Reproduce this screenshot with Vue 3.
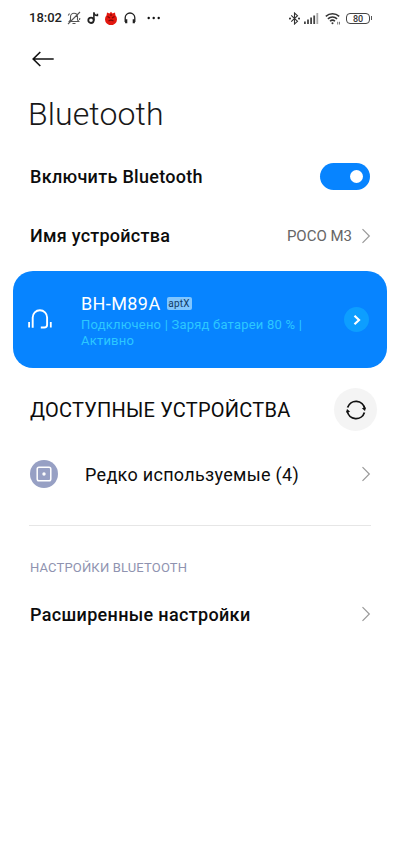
<script setup>
const chevron = 'M1.5 1.2 8.3 8 1.5 14.8'
</script>

<template>
  <main class="screen">
    <header class="status">
      <span class="clock">18:02</span>
      <svg class="s-bell" width="14" height="14" viewBox="0 0 14 14" fill="none" stroke="#555" stroke-width="1.1">
        <path d="M2.2 10.5h9.6l-1.3-1.8V6C10.500 3.700 9 2.300 7 2.300S3.500 3.700 3.500 6v2.700zM5.500 12.500h3M1 13 13 1M1.200 4.500l1.300-2M12.800 7l-.3 2" />
      </svg>
      <svg class="s-note" width="12" height="14" viewBox="0 0 12 14" fill="none" stroke="#222" stroke-width="1.800">
        <circle cx="4" cy="9.300" r="2.700" />
        <path d="M6.900 9.500V1.200c.2 2.200 1.500 3.500 3.500 3.300V2.800" stroke-width="1.600" />
      </svg>
      <svg class="s-red" width="12" height="14" viewBox="0 0 12 14">
        <path d="M2 1.500 4.500 2.500 6 .8l1.500 1.700L10 1.500l.4 2.700A6 6 0 1 1 1.600 4.200z" fill="#e3170f" />
        <path d="m2.500 5.500 2.500 1.500M9.500 5.500 7 7M3.500 10q2.500-1.800 5 0M6 3v2" stroke="#7c0907" stroke-width="1.100" fill="none" />
      </svg>
      <svg class="s-head" width="12" height="13" viewBox="0 0 12 13" fill="none" stroke="#222" stroke-width="1.300">
        <path d="M1.200 10V5.800a4.800 4.800 0 0 1 9.600 0V10" />
        <path d="M2.200 7.300v4M9.800 7.300v4" stroke-width="2.200" />
      </svg>
      <svg class="s-dots" width="14" height="4" viewBox="0 0 14 4" fill="#111">
        <circle cx="1.700" cy="2" r="1.200" /><circle cx="6.700" cy="2" r="1.200" /><circle cx="11.700" cy="2" r="1.200" />
      </svg>
      <span class="grow"></span>
      <svg class="s-bt" width="11" height="13" viewBox="0 0 11 13" fill="none" stroke="#333" stroke-width="1.100">
        <path d="m2.200 3.300 6.300 6L5.500 12V1l3 2.700-6.300 6" />
        <circle cx="1" cy="6.500" r=".5" /><circle cx="10" cy="6.500" r=".5" />
      </svg>
      <svg class="s-sig" width="15" height="11" viewBox="0 0 15 11" fill="#444">
        <path d="M0 8.500h1.800V11H0zM3.100 6.500h1.800V11H3.100zM6.200 4.500H8V11H6.200zM9.300 2.500h1.800V11H9.300z" />
        <path d="M12.400 0h1.800v11h-1.800z" fill="#aaa" />
      </svg>
      <svg class="s-wifi" width="17" height="13" viewBox="0 0 17 13" fill="none" stroke="#333" stroke-width="1.500">
        <path d="M.8 4.400a10 10 0 0 1 13.400 0M2.900 6.900a6.800 6.800 0 0 1 9.200 0M5 9.300a3.700 3.700 0 0 1 5 0" />
        <circle cx="7.500" cy="11.200" r="1" fill="#333" stroke="none" />
        <path d="M12.700 9.800v2.700M14.500 9.800v2.700" stroke="#777" stroke-width="1" />
      </svg>
      <span class="battery">80</span><i class="nub"></i>
    </header>

    <nav class="back">
      <svg width="24" height="18" viewBox="0 0 24 18" fill="none" stroke="#111" stroke-width="1.600">
        <path d="M22.700 9H2M9.300 2 2.200 9l7.100 7" />
      </svg>
    </nav>

    <h1>Bluetooth</h1>

    <section class="row">
      <span class="strong t-enable">Включить Bluetooth</span>
      <span class="toggle"><i></i></span>
    </section>

    <section class="row">
      <span class="strong t-name">Имя устройства</span>
      <span class="value">POCO M3</span>
      <svg class="chev" width="10" height="16" viewBox="0 0 10 16"><path :d="chevron" /></svg>
    </section>

    <section class="card">
      <svg class="phones" width="24" height="22" viewBox="0 0 24 22" fill="none" stroke="#fff" stroke-width="1.900">
        <path d="M4.700 18.700V8.500a7.200 7.200 0 0 1 14.400 0v7.200q0 2.800-2.900 2.800h-3.400" />
        <path d="M1.100 13v5.500M22.800 13v5.500" stroke-width="1.800" />
      </svg>
      <div class="info">
        <div class="device"><span class="t-device">BH-M89A</span><span class="badge">aptX</span></div>
        <div class="state">Подключено | Заряд батареи 80 % |<br />Активно</div>
      </div>
      <span class="go">
        <svg width="8" height="10" viewBox="0 0 8 10" fill="none" stroke="#fff" stroke-width="2.200"><path d="M1.500 .8 6 5 1.500 9.200" /></svg>
      </span>
    </section>

    <section class="available">
      <h2>ДОСТУПНЫЕ УСТРОЙСТВА</h2>
      <span class="refresh">
        <svg width="22" height="20" viewBox="0 0 22 20" fill="none" stroke="#111" stroke-width="1.800">
          <path d="M2.600 7.600A8.800 8.800 0 0 1 19.700 8.800M19.400 12.400A8.800 8.800 0 0 1 2.300 11.200" />
          <path d="m16.800 8.200 3.200 2.700L21 7.600zM5.200 11.800 2 9.100 1 12.400z" fill="#111" stroke="none" />
        </svg>
      </span>
    </section>

    <section class="row rare">
      <svg class="disc" width="28" height="28" viewBox="0 0 28 28">
        <circle cx="14" cy="14" r="14" fill="#97a0c4" />
        <rect x="7.200" y="7.200" width="13.600" height="13.600" rx="1.800" fill="none" stroke="#fff" stroke-width="1.500" />
        <circle cx="14" cy="14" r="1.700" fill="#fff" />
      </svg>
      <span class="t-rare">Редко используемые (4)</span>
      <svg class="chev" width="10" height="16" viewBox="0 0 10 16"><path :d="chevron" /></svg>
    </section>

    <hr />

    <h3>НАСТРОЙКИ BLUETOOTH</h3>

    <section class="row advanced">
      <span class="strong t-adv">Расширенные настройки</span>
      <svg class="chev" width="10" height="16" viewBox="0 0 10 16"><path :d="chevron" /></svg>
    </section>
  </main>
</template>

<style>
body { background: #fff; }
</style>

<style scoped>
.screen {
  box-sizing: border-box;
  width: 400px;
  height: 867px;
  background: #fff;
  color: #0c0c0c;
  font-family: Roboto, "Liberation Sans", sans-serif;
  overflow: hidden;
  white-space: nowrap;
}
svg { display: block; flex: none; }
h1, h2, h3 { margin: 0; }
.status { display: flex; align-items: center; height: 36px; padding: 0 28px 0 29px; }
.clock { width: 38px; font-size: 13px; font-weight: 500; line-height: 36px; color: #222; }
.s-note { margin-left: 6px; }
.s-red { margin-left: 6px; }
.s-head { margin-left: 7px; }
.s-dots { margin-left: 11px; }
.grow { flex: 1; }
.s-sig { margin-left: 4px; }
.s-wifi { margin-left: 6px; }
.battery {
  box-sizing: border-box;
  width: 24px;
  height: 11px;
  margin-left: 4px;
  border: 1px solid #444;
  border-radius: 4px;
  font-size: 9px;
  font-weight: 500;
  line-height: 10px;
  text-align: center;
  color: #333;
}
.nub { width: 1px; height: 4px; margin-left: 1px; background: #555; }
.back { display: flex; align-items: center; height: 45px; padding-left: 31px; }
h1 { height: 66px; padding-left: 28px; line-height: 67px; font-size: 32px; font-weight: 300; letter-spacing: 0.1px; color: #181818; }
.row { display: flex; align-items: center; height: 59px; padding: 0 29px 0 30px; }
.strong { font-size: 18px; font-weight: 500; }
.t-enable { letter-spacing: 0.29px; }
.t-name { letter-spacing: 0.25px; }
.t-adv { letter-spacing: 0.33px; }
.toggle { box-sizing: border-box; width: 50px; height: 27px; margin-left: auto; margin-right: 1px; padding: 7px; border-radius: 14px; background: #0784ff; display: flex; justify-content: flex-end; }
.toggle i { width: 13px; height: 13px; border-radius: 50%; background: #fff; }
.value { margin-left: auto; font-size: 15px; color: #666; }
.chev { margin-left: auto; fill: none; stroke: #999; stroke-width: 1.200; }
.value + .chev { margin-left: 9px; }
.card { box-sizing: border-box; display: flex; align-items: center; height: 97px; margin: 6px 13px 0; padding: 0 18px 0 15px; border-radius: 20px; background: #0784ff; color: #fff; }
.info { flex: 1; margin-left: 29px; }
.device { display: flex; align-items: center; height: 22px; font-size: 18px; letter-spacing: 0.4px; }
.badge { width: 25px; height: 13px; margin-left: 6px; border-radius: 2px; background: #80c6ff; color: #123b66; font-size: 10px; line-height: 13px; letter-spacing: 0.2px; text-align: center; }
.state { margin: 2px 0 -2px; font-size: 13px; line-height: 16px; letter-spacing: 0.21px; color: #2cc8ff; }
.go { display: flex; align-items: center; justify-content: center; width: 25px; height: 25px; border-radius: 50%; background: #0d9eff; }
.available { display: flex; align-items: center; justify-content: space-between; height: 83px; padding: 0 23px 0 30px; }
h2 { font-size: 20px; font-weight: 400; letter-spacing: 0.23px; }
.refresh { display: flex; align-items: center; justify-content: center; width: 43px; height: 43px; border-radius: 50%; background: #f4f4f4; }
.rare { height: 46px; font-size: 18px; letter-spacing: 0.3px; }
.disc { margin-right: 27px; }
hr { height: 1px; margin: 28px 29px 0; border: 0; background: #e6e6e6; }
h3 { height: 40px; margin-top: 21px; padding-left: 30px; line-height: 41px; font-size: 13px; font-weight: 400; letter-spacing: 0.16px; color: #8f93b0; }
.advanced { height: 54px; }
</style>
